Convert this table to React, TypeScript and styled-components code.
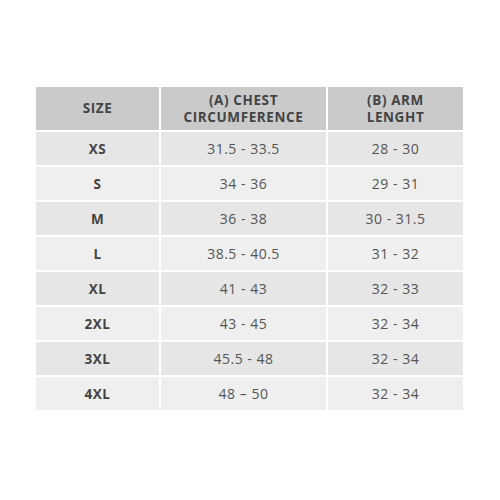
import { Fragment } from "react";
import styled, { createGlobalStyle } from "styled-components";

const GlobalStyle = createGlobalStyle`
    html, body {
        margin: 0;
        padding: 0;
        background: #fff;
    }
`

const Page = styled.div`
    box-sizing: border-box;
    width: 500px;
    height: 500px;
    padding: 87px 0 0 36px;
    font-family: "Open Sans", "Liberation Sans", sans-serif;
`

const Grid = styled.div`
    display: grid;
    grid-template-columns: 123px 165px 135px;
    grid-template-rows: 43px;
    grid-auto-rows: 33px;
    gap: 2px;
    width: 427px;
`

const HeadCell = styled.div`
    display: flex;
    flex-direction: column;
    align-items: center;
    justify-content: center;
    text-align: center;
    background: #cacaca;
    color: #444;
    font-size: 13.5px;
    font-weight: 700;
    letter-spacing: 0.6px;
    text-transform: uppercase;
`

const HeadLine = styled.span`
    display: block;
    line-height: 17px;
`

const Cell = styled.div<{ $alt: boolean; $bold?: boolean }>`
    display: flex;
    align-items: center;
    justify-content: center;
    background: ${(p) => (p.$alt ? "#efefef" : "#e6e6e6")};
    color: ${(p) => (p.$bold ? "#444" : "#555")};
    font-size: ${(p) => (p.$bold ? "13.5px" : "14px")};
    font-weight: ${(p) => (p.$bold ? 700 : 400)};
    letter-spacing: 0.5px;
`

const sizes = [
    { size: "XS", chest: "31.5 - 33.5", arm: "28 - 30" },
    { size: "S", chest: "34 - 36", arm: "29 - 31" },
    { size: "M", chest: "36 - 38", arm: "30 - 31.5" },
    { size: "L", chest: "38.5 - 40.5", arm: "31 - 32" },
    { size: "XL", chest: "41 - 43", arm: "32 - 33" },
    { size: "2XL", chest: "43 - 45", arm: "32 - 34" },
    { size: "3XL", chest: "45.5 - 48", arm: "32 - 34" },
    { size: "4XL", chest: "48 – 50", arm: "32 - 34" },
]

const App = () => {
    return (
        <>
            <GlobalStyle />
            <Page>
                <Grid>
                    <HeadCell><HeadLine>Size</HeadLine></HeadCell>
                    <HeadCell>
                        <HeadLine>(A) Chest</HeadLine>
                        <HeadLine>Circumference</HeadLine>
                    </HeadCell>
                    <HeadCell>
                        <HeadLine>(B) Arm</HeadLine>
                        <HeadLine>Lenght</HeadLine>
                    </HeadCell>
                    {sizes.map((row, index) => (
                        <Fragment key={index}>
                            <Cell $alt={index % 2 === 1} $bold>{row.size}</Cell>
                            <Cell $alt={index % 2 === 1}>{row.chest}</Cell>
                            <Cell $alt={index % 2 === 1}>{row.arm}</Cell>
                        </Fragment>
                    ))}
                </Grid>
            </Page>
        </>
    )
}
export default App
